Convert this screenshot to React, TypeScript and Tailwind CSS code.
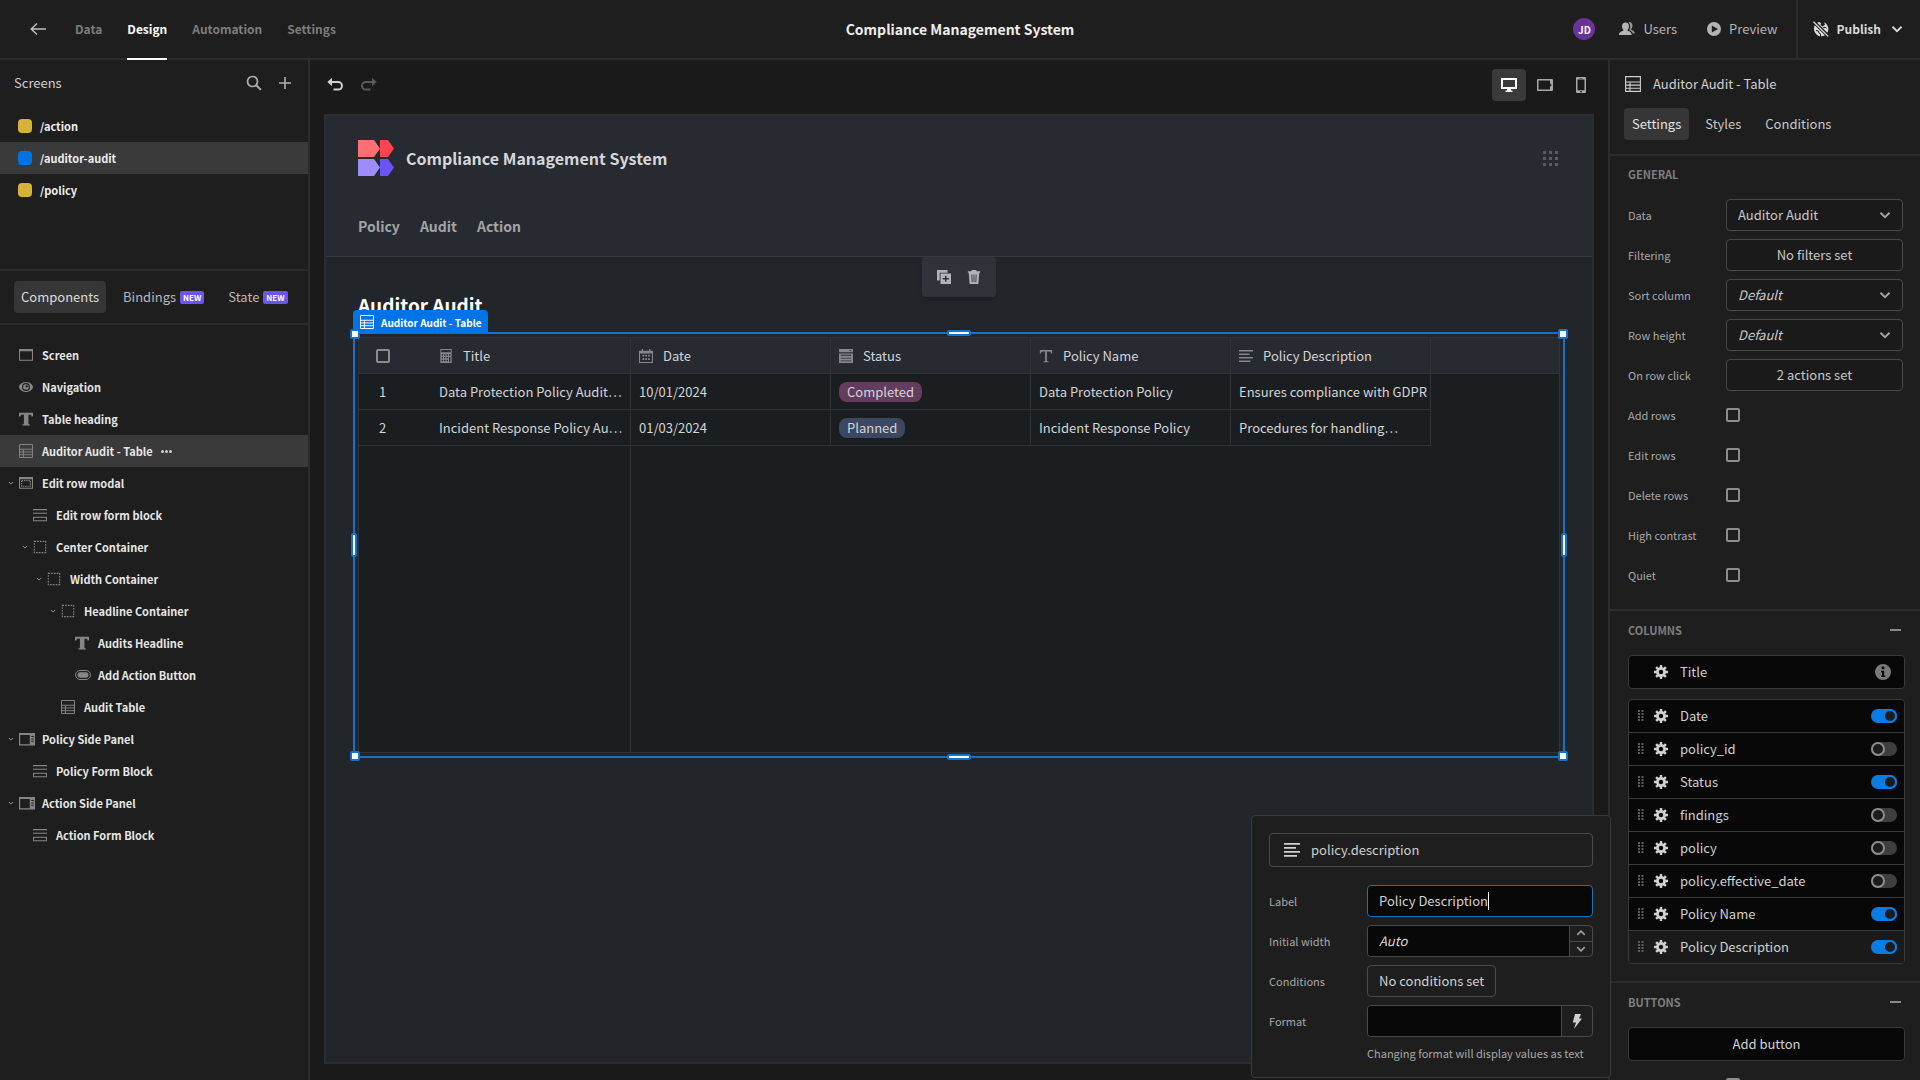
import type { ReactNode } from 'react';

interface IconProps {
  className?: string;
}

function Svg({ className = 'size-4', children }: IconProps & { children: ReactNode }) {
  return (
    <svg viewBox="0 0 16 16" fill="currentColor" className={`shrink-0 ${className}`} aria-hidden="true">
      {children}
    </svg>
  );
}

const BackIcon = () => (
  <Svg>
    <path d="M7 2.5 1.2 8 7 13.5M1.5 8H16" fill="none" stroke="currentColor" strokeWidth="1.4" />
  </Svg>
);

const SearchIcon = () => (
  <Svg>
    <circle cx="6.5" cy="6.5" r="5" fill="none" stroke="currentColor" strokeWidth="1.7" />
    <path d="m10.3 10.3 4.6 4.6" stroke="currentColor" strokeWidth="2" />
  </Svg>
);

const PlusIcon = () => (
  <Svg>
    <path d="M7.200 2h1.600v5.200H14v1.600H8.800V14H7.200V8.800H2V7.200h5.200z" />
  </Svg>
);

const UndoIcon = ({ className }: IconProps) => (
  <Svg className={className}>
    <path d="M5 .8v8.4L.3 5z" />
    <path d="M4 5h7.2a3.7 3.7 0 0 1 0 7.6H6.500" fill="none" stroke="currentColor" strokeWidth="2" />
  </Svg>
);

const ChevronIcon = ({ className = 'w-3 h-3' }: IconProps) => (
  <Svg className={className}>
    <path d="m2 5 6 6 6-6" fill="none" stroke="currentColor" strokeWidth="2.4" />
  </Svg>
);

const UsersIcon = () => (
  <Svg>
    <path d="M6.500 1.500C8.600 1.500 10 3 10 5.300c0 1.500-.6 2.700-1.400 3.500v1c1.600.6 4 1.200 4 3.900V14H0v-.3c0-2.700 2.600-3.300 4.300-3.900v-1C3.500 8 3 6.800 3 5.300 3 3 4.400 1.500 6.500 1.500z" />
    <path d="M9.500 1.200c2-.6 4 .9 4 3.300 0 1.500-.6 2.600-1.300 3.400v.9c1.500.6 3.600 1.300 3.600 3.700h-2c-.5-1.800-2-2.500-3.600-3.200 1.500-2.600 1.300-6.100-.7-8.100z" opacity=".8" />
  </Svg>
);

const PlayIcon = () => (
  <Svg className="size-3.5">
    <path fillRule="evenodd" d="M8 0a8 8 0 1 0 0 16A8 8 0 0 0 8 0zM5.500 4v8l7-4z" />
  </Svg>
);

const GlobeStrikeIcon = () => (
  <Svg>
    <path d="M1.800 4.200 12 14.300A7.300 7.300 0 0 1 1 8.300c-.2-1.500.1-3 .8-4.100zM4.200 1.700 6.500.900 8 2.200 7.500 4l2 1.500L12 3.800l-1-2.500a7.400 7.400 0 0 1 3.300 10.500z" />
    <path d="M.5.8 15.200 15.400" stroke="currentColor" strokeWidth="1.300" />
    <path d="M3 9.500 5.500 10l.5 2 1.500 1V16M9.800 7l2.200-.8 1.500 1" fill="none" stroke="#1e1e1e" strokeWidth="1" />
  </Svg>
);

const DesktopIcon = () => (
  <Svg>
    <path fillRule="evenodd" d="M0 1h16v11H10v1.500h1.500V15h-7v-1.500H6V12H0zM2 3v7h12V3z" />
  </Svg>
);

const TabletIcon = () => (
  <Svg>
    <path fillRule="evenodd" d="M1 2h14a1 1 0 0 1 1 1v10a1 1 0 0 1-1 1H1a1 1 0 0 1-1-1V3a1 1 0 0 1 1-1zm.5 1.500v9H13V9.200h1.200V6.800H13V3.500z" />
  </Svg>
);

const PhoneIcon = () => (
  <Svg>
    <path fillRule="evenodd" d="M4 0h8a1 1 0 0 1 1 1v14a1 1 0 0 1-1 1H4a1 1 0 0 1-1-1V1a1 1 0 0 1 1-1zm.5 2.500v10.800h7V2.500zM7 14.200v1h2v-1zM6.500 .9v.7h3V.9z" />
  </Svg>
);

const TableIcon = ({ className = 'size-3.5' }: IconProps) => (
  <Svg className={className}>
    <path d="M.6.600h14.800v14.800H.6zM.6 6h14.800M.6 9.100h14.800M.6 12.200h14.800M5 6v9.400" fill="none" stroke="currentColor" strokeWidth="1.100" />
  </Svg>
);

const ScreenIcon = ({ className = 'size-3.5' }: IconProps) => (
  <Svg className={className}>
    <path fillRule="evenodd" d="M0 1h16v13.500H0zM1.200 3.600v9.700h13.600V3.600z" />
  </Svg>
);

const ModalIcon = () => (
  <Svg className="size-3.5">
    <path fillRule="evenodd" d="M0 1h16v13.500H0zM1.200 3.600v9.700h13.600V3.600z" />
    <path d="M3 5.300h10v6.400H3z" fill="none" stroke="currentColor" strokeWidth="1.300" strokeDasharray="1.600 1" />
  </Svg>
);

const EyeIcon = () => (
  <Svg className="size-3.5">
    <path fillRule="evenodd" d="M8 2.200C3.600 2.200 0 5.500 0 8s3.600 5.800 8 5.800S16 10.500 16 8 12.400 2.200 8 2.200zm0 1.300a4.500 4.500 0 1 1 0 9 4.500 4.500 0 0 1 0-9z" />
    <path fillRule="evenodd" d="M8 4.800a3.200 3.200 0 1 0 0 6.400 3.200 3.200 0 0 0 0-6.400zm.8 1.300a1.300 1.300 0 1 1 0 2.600 1.300 1.300 0 0 1 0-2.600z" />
  </Svg>
);

const HeadingIcon = ({ className = 'size-3.5' }: IconProps) => (
  <Svg className={className}>
    <path d="M0 .800h16v4.400h-1.600c-.2-1.300-.8-2-2-2h-1.600v10c0 .8.600 1 1.800 1.100v1.200H3.800v-1.200c1.200-.1 1.800-.3 1.800-1.100v-10H3.600c-1.200 0-1.800.7-2 2H0z" />
  </Svg>
);

const TextIcon = () => (
  <Svg className="size-3.5">
    <path d="M1 1h14v4h-1.300c-.1-1.400-.6-2.200-2-2.200H9V13c0 .8.500 1 1.800 1.100v1H5.200v-1C6.500 14 7 13.800 7 13V2.800H4.300c-1.400 0-1.900.8-2 2.200H1z" />
  </Svg>
);

const FormIcon = () => (
  <Svg className="size-3.5">
    <path d="M0 1.800h16M0 6h16" stroke="currentColor" strokeWidth="1.300" />
    <path d="M.6 10.600h14.800v3.900H.6z" fill="none" stroke="currentColor" strokeWidth="1.200" />
  </Svg>
);

const ContainerIcon = () => (
  <Svg className="size-3.5">
    <path d="M1.500 1.500h13v13h-13z" fill="none" stroke="currentColor" strokeWidth="1.300" strokeDasharray="1.900 1.300" />
  </Svg>
);

const PillIcon = () => (
  <Svg className="size-4">
    <rect x=".5" y="3.500" width="15" height="9" rx="4.500" fill="none" stroke="currentColor" strokeWidth="1" />
    <rect x="2.500" y="5.300" width="11" height="5.400" rx="2.700" />
  </Svg>
);

const SidePanelIcon = () => (
  <Svg className="size-4">
    <path fillRule="evenodd" d="M0 2h16v12.500H0zM1.200 4v9.300h9.600V4zM12.200 5v1h2.600V5zm0 2.400v1h2.600v-1zm0 2.400v1h2.600v-1z" />
  </Svg>
);

const DuplicateIcon = () => (
  <Svg className="size-3.5">
    <path d="M0 0h12v3H3v9H0z" />
    <path fillRule="evenodd" d="M4 4h12v12H4zm5.200 2.500v2.700H6.500v1.600h2.700v2.700h1.600v-2.700h2.700V9.200h-2.700V6.500z" />
  </Svg>
);

const TrashIcon = () => (
  <Svg className="size-3.5">
    <path fillRule="evenodd" d="M5.500 0h5l.6 1.500H15V3h-1l-1 13H3L2 3H1V1.500h3.900zM5 5l.4 9h1L6 5zm2.500 0v9h1V5zM10 5l-.4 9h1L11 5z" />
  </Svg>
);

const CalculatorIcon = () => (
  <Svg className="size-3.5">
    <path fillRule="evenodd" d="M1.500 0h13v16h-13zM2.700 1.200v2.600h10.600V1.200zM3 6v1.700h1.700V6zm2.800 0v1.700h1.700V6zm2.800 0v1.700h1.700V6zm2.800 0v1.700H13V6zM3 9v1.700h1.700V9zm2.800 0v1.700h1.700V9zm2.800 0v1.700h1.700V9zm2.800 0v5.500H13V9zM3 12.300V14h1.700v-1.700zm2.800 0V14h1.700v-1.700zm2.800 0V14h1.700v-1.700z" />
  </Svg>
);

const CalendarIcon = () => (
  <Svg className="size-3.5">
    <path fillRule="evenodd" d="M0 2h3V0h1.500v2h7V0H13v2h3v14H0zm1.200 3v9.800h13.600V5z" />
    <path d="M4 6.500h2v2H4zm3.200 0h2v2h-2zm3.200 0h2v2h-2zM4 10.500h2v2H4zm3.200 0h2v2h-2zm3.200 0h2v2h-2z" />
  </Svg>
);

const OptionsIcon = () => (
  <Svg className="size-3.5">
    <path fillRule="evenodd" d="M0 0h16v3.700H0zm11.500 1 1.300 1.700L14.100 1z" />
    <path fillRule="evenodd" d="M0 5h16v11H0zm2 1.700v1h12v-1zm0 3.200v1h12v-1zm0 3.200v1h12v-1z" />
  </Svg>
);

const ParagraphIcon = ({ className = 'size-3.5' }: IconProps) => (
  <Svg className={className}>
    <path d="M0 1h16v1.800H0zM0 5h12v1.800H0zM0 9h16v1.800H0zM0 13h13v1.800H0z" />
  </Svg>
);

const GearIcon = () => (
  <Svg className="size-3.5">
    <path
      fillRule="evenodd"
      d="M6.600 0h2.800v2.400l1.500.6 1.700-1.700 2 2L12.900 5l.6 1.600H16v2.800h-2.500l-.6 1.600 1.700 1.700-2 2-1.700-1.700-1.500.6V16H6.600v-2.400L5.100 13l-1.700 1.700-2-2L3.100 11l-.6-1.600H0V6.600h2.500L3.100 5 1.400 3.300l2-2L5.100 3l1.500-.6zM8 5.500a2.500 2.500 0 1 0 0 5 2.500 2.500 0 0 0 0-5z"
    />
  </Svg>
);

const InfoIcon = () => (
  <Svg>
    <path fillRule="evenodd" d="M8 0a8 8 0 1 0 0 16A8 8 0 0 0 8 0zm0 2.300a1.500 1.500 0 1 1 0 3 1.500 1.500 0 0 1 0-3zM6 6.800h3.200v4.700h1V13H6v-1.500h1V8.200H6z" />
  </Svg>
);

const DragIcon = () => (
  <svg viewBox="0 0 6 12" fill="currentColor" className="h-3 w-1.5 shrink-0" aria-hidden="true">
    {[0, 3, 6, 9].map((y) => (
      <path key={y} d={`M0 ${y}h2v2H0zM3.500 ${y}h2v2h-2z`} />
    ))}
  </svg>
);

const BoltIcon = () => (
  <Svg>
    <path d="M6 1h6l-2 4.600h3L5 16l2-6.500H3.800z" />
  </Svg>
);

const Logo = () => (
  <svg viewBox="0 0 36 36" className="size-9 shrink-0" aria-hidden="true">
    <path d="M0 0h16l6 8.500-6 8.500H0z" fill="#ff6f74" />
    <path d="M22 0h8l6 8.500-6 8.500h-8z" fill="#ff4550" />
    <path d="M0 19h16l6 8.500-6 8.500H0z" fill="#9d8cfa" />
    <path d="M22 19h8l6 8.500-6 8.500h-8z" fill="#6a55f3" />
  </svg>
);

const SCREENS = [
  { path: '/action', color: 'bg-[#d8b13a]', active: false },
  { path: '/auditor-audit', color: 'bg-[#0073e0]', active: true },
  { path: '/policy', color: 'bg-[#d8b13a]', active: false },
];

const INDENT = ['pl-[7px]', 'pl-[21px]', 'pl-[35px]', 'pl-[49px]', 'pl-[63px]'];

interface TreeNode {
  label: string;
  depth: number;
  icon: ReactNode;
  open?: boolean;
  active?: boolean;
}

const TREE: TreeNode[] = [
  { label: 'Screen', depth: 0, icon: <ScreenIcon /> },
  { label: 'Navigation', depth: 0, icon: <EyeIcon /> },
  { label: 'Table heading', depth: 0, icon: <HeadingIcon /> },
  { label: 'Auditor Audit - Table', depth: 0, icon: <TableIcon />, active: true },
  { label: 'Edit row modal', depth: 0, icon: <ModalIcon />, open: true },
  { label: 'Edit row form block', depth: 1, icon: <FormIcon /> },
  { label: 'Center Container', depth: 1, icon: <ContainerIcon />, open: true },
  { label: 'Width Container', depth: 2, icon: <ContainerIcon />, open: true },
  { label: 'Headline Container', depth: 3, icon: <ContainerIcon />, open: true },
  { label: 'Audits Headline', depth: 4, icon: <HeadingIcon /> },
  { label: 'Add Action Button', depth: 4, icon: <PillIcon /> },
  { label: 'Audit Table', depth: 3, icon: <TableIcon /> },
  { label: 'Policy Side Panel', depth: 0, icon: <SidePanelIcon />, open: true },
  { label: 'Policy Form Block', depth: 1, icon: <FormIcon /> },
  { label: 'Action Side Panel', depth: 0, icon: <SidePanelIcon />, open: true },
  { label: 'Action Form Block', depth: 1, icon: <FormIcon /> },
];

const TABLE_COLUMNS = [
  { label: 'Title', icon: <CalculatorIcon /> },
  { label: 'Date', icon: <CalendarIcon /> },
  { label: 'Status', icon: <OptionsIcon /> },
  { label: 'Policy Name', icon: <TextIcon /> },
  { label: 'Policy Description', icon: <ParagraphIcon /> },
];

const ROWS = [
  {
    title: 'Data Protection Policy Audit…',
    date: '10/01/2024',
    status: 'Completed',
    badge: 'bg-[#633d5f]',
    policy: 'Data Protection Policy',
    description: 'Ensures compliance with GDPR',
  },
  {
    title: 'Incident Response Policy Au…',
    date: '01/03/2024',
    status: 'Planned',
    badge: 'bg-[#3b4763]',
    policy: 'Incident Response Policy',
    description: 'Procedures for handling…',
  },
];

const FIELDS = [
  { label: 'Date', on: true },
  { label: 'policy_id', on: false },
  { label: 'Status', on: true },
  { label: 'findings', on: false },
  { label: 'policy', on: false },
  { label: 'policy.effective_date', on: false },
  { label: 'Policy Name', on: true },
  { label: 'Policy Description', on: true },
];

const CHECKBOX = 'block size-3.5 shrink-0 appearance-none rounded-xs border-2 border-[#8c8c8c]';
const FIELD_BOX = 'h-8 w-full rounded-sm border border-[#494949] bg-[#1a1a1a] text-[#c8c8c8]';

function TopBar() {
  return (
    <header className="grid h-[60px] shrink-0 grid-cols-[1fr_auto_1fr] border-b-2 border-[#2c2c2c] text-[13px]">
      <div className="flex items-center pl-[30px]">
        <button aria-label="Back" className="mr-[29px] text-[#c0c0c0]">
          <BackIcon />
        </button>
        <nav className="-mb-0.5 flex gap-[25px] self-stretch text-xs font-bold text-[#7d7d7d]">
          <a href="#data" className="flex items-center border-b-2 border-transparent">Data</a>
          <a href="#design" className="flex items-center border-b-2 border-white text-white">Design</a>
          <a href="#automation" className="flex items-center border-b-2 border-transparent">Automation</a>
          <a href="#settings" className="flex items-center border-b-2 border-transparent">Settings</a>
        </nav>
      </div>
      <h1 className="self-center text-sm font-bold text-[#ededed]">Compliance Management System</h1>
      <div className="flex items-center justify-end text-[#b4b4b4]">
        <span className="mr-6 flex size-[22px] items-center justify-center rounded-full bg-[#6a3399] text-[10px] font-bold text-white">
          JD
        </span>
        <button className="mr-[30px] flex items-center gap-2">
          <UsersIcon />
          Users
        </button>
        <button className="mr-[18px] flex items-center gap-2">
          <PlayIcon />
          Preview
        </button>
        <button className="flex items-center gap-2 self-stretch border-l-2 border-[#2c2c2c] pr-[17px] pl-[15px] text-xs font-bold text-[#dadada]">
          <GlobeStrikeIcon />
          Publish
          <ChevronIcon className="ml-0.5 size-3" />
        </button>
      </div>
    </header>
  );
}

function LeftPanel() {
  return (
    <aside className="w-[310px] shrink-0 border-r-2 border-[#2c2c2c]">
      <section className="h-[211px] border-b-2 border-[#2c2c2c]">
        <div className="flex h-[46px] items-center pr-[15px] pl-3.5">
          <h2 className="flex-1 text-[13px] text-[#d0d0d0]">Screens</h2>
          <div className="flex gap-[15px] text-[#b0b0b0]">
            <button aria-label="Search screens"><SearchIcon /></button>
            <button aria-label="Add screen"><PlusIcon /></button>
          </div>
        </div>
        <ul className="pt-1 text-[11px] font-bold text-[#efefef]">
          {SCREENS.map((s) => (
            <li key={s.path} className={`flex h-8 items-center gap-2 pl-[18px] ${s.active ? 'bg-[#3a3a3a]' : ''}`}>
              <span className={`size-3.5 rounded-sm ${s.color}`} />
              {s.path}
            </li>
          ))}
        </ul>
      </section>
      <div className="flex h-[54px] items-center border-b-2 border-[#2c2c2c] pl-3.5 text-[13px] text-[#b8b8b8]">
        <button className="h-8 rounded-sm bg-[#363636] px-[7px] text-[#dcdcdc]">Components</button>
        <button className="ml-[17px] flex items-center gap-1">
          Bindings
          <span className="rounded-xs bg-[#6a55f3] px-[3px] text-[8px] leading-[13px] font-bold text-white">NEW</span>
        </button>
        <button className="ml-6 flex items-center gap-1">
          State
          <span className="rounded-xs bg-[#6a55f3] px-[3px] text-[8px] leading-[13px] font-bold text-white">NEW</span>
        </button>
      </div>
      <ul className="pt-3.5 text-[11px] font-bold text-[#e6e6e6]">
        {TREE.map((node) => (
          <li
            key={node.label}
            className={`flex h-8 items-center ${INDENT[node.depth]} ${node.active ? 'bg-[#3a3a3a]' : ''}`}
          >
            <span className="w-3 text-[#9a9a9a]">{node.open && <ChevronIcon className="ml-px size-1.5" />}</span>
            <span className="w-[23px] text-[#868686]">{node.icon}</span>
            {node.label}
            {node.active && (
              <button aria-label="More actions" className="ml-2 flex gap-px">
                <span className="size-[3px] rounded-full bg-[#d0d0d0]" />
                <span className="size-[3px] rounded-full bg-[#d0d0d0]" />
                <span className="size-[3px] rounded-full bg-[#d0d0d0]" />
              </button>
            )}
          </li>
        ))}
      </ul>
    </aside>
  );
}

function AuditTable() {
  const cell = 'truncate border-r border-b border-[#2f3337] pl-2';
  return (
    <table className="h-full w-full table-fixed border-separate border-spacing-0 border border-[#2f3337] bg-[#1b1e20] text-left text-[13px] text-[#d4d5d6]">
      <colgroup>
        <col className="w-[72px]" />
        {TABLE_COLUMNS.map((c) => (
          <col key={c.label} className="w-[200px]" />
        ))}
        <col />
      </colgroup>
      <thead>
        <tr className="h-9 bg-[#272a31]">
          <th className="border-b border-[#2f3337] pl-[17px]">
            <input type="checkbox" aria-label="Select all rows" className={CHECKBOX} />
          </th>
          {TABLE_COLUMNS.map((c) => (
            <th key={c.label} className={`${cell} font-normal`}>
              <span className="flex items-center gap-2.5">
                <span className="text-[#85888d]">{c.icon}</span>
                {c.label}
              </span>
            </th>
          ))}
          <td className="border-b border-[#2f3337]" />
        </tr>
      </thead>
      <tbody>
        {ROWS.map((row, i) => (
          <tr key={row.title} className="h-9">
            <td className="border-b border-[#2f3337] pl-5">{i + 1}</td>
            <td className={cell}>{row.title}</td>
            <td className={cell}>{row.date}</td>
            <td className={cell}>
              <span className={`inline-block h-5 rounded-lg px-2 leading-5 ${row.badge}`}>{row.status}</span>
            </td>
            <td className={cell}>{row.policy}</td>
            <td className={cell}>{row.description}</td>
            <td />
          </tr>
        ))}
        <tr>
          <td colSpan={2} className="border-r border-[#2f3337]" />
          <td colSpan={5} />
        </tr>
      </tbody>
    </table>
  );
}

function Selection() {
  const corner = 'absolute size-2.5 rounded-xs border-2 border-[#1272cc] bg-white';
  const bar = 'absolute rounded-xs border-2 border-[#1272cc] bg-white';
  return (
    <div className="pointer-events-none absolute -inset-[5px] border-2 border-[#1272cc]">
      <div className="absolute -top-6 -left-0.5 flex h-6 items-center gap-[7px] rounded-t-sm bg-[#0073e6] pr-1.5 pl-[7px] text-[10px] font-bold whitespace-nowrap text-white">
        <TableIcon />
        Auditor Audit - Table
      </div>
      <span className={`${corner} -top-[5px] -left-[5px]`} />
      <span className={`${corner} -top-[5px] -right-[5px]`} />
      <span className={`${corner} -bottom-[5px] -left-[5px]`} />
      <span className={`${corner} -right-[5px] -bottom-[5px]`} />
      <span className={`${bar} -top-1 left-1/2 h-1.5 w-6 -translate-x-1/2`} />
      <span className={`${bar} -bottom-1 left-1/2 h-1.5 w-6 -translate-x-1/2`} />
      <span className={`${bar} top-1/2 -left-1 h-6 w-1.5 -translate-y-1/2`} />
      <span className={`${bar} top-1/2 -right-1 h-6 w-1.5 -translate-y-1/2`} />
    </div>
  );
}

function Canvas() {
  return (
    <div className="relative flex flex-1 flex-col border-2 border-[#2b2d2e] bg-[#222529]">
      <div className="border-b border-[#363a40] bg-[#272a31] px-8 pt-6 pb-[18px]">
        <div className="flex items-center gap-3">
          <Logo />
          <h2 className="flex-1 text-base font-bold text-[#d6d7d9]">Compliance Management System</h2>
          <svg viewBox="0 0 15 15" fill="#595c61" className="mr-0.5 size-[15px]" aria-hidden="true">
            {[0, 6, 12].map((y) => (
              <path key={y} d={`M0 ${y}h3v3H0zM6 ${y}h3v3H6zM12 ${y}h3v3h-3z`} />
            ))}
          </svg>
        </div>
        <nav className="mt-[38px] flex h-6 items-center gap-5 text-sm font-bold text-[#a2a4a7]">
          <a href="#policy">Policy</a>
          <a href="#audit">Audit</a>
          <a href="#action">Action</a>
        </nav>
      </div>
      <div className="px-8 pt-8">
        <h3 className="mb-4 h-8 text-[19px] leading-8 font-bold text-white">Auditor Audit</h3>
        <div className="relative h-[416px]">
          <AuditTable />
          <Selection />
        </div>
      </div>
      <div className="absolute top-[141px] left-1/2 flex h-10 w-[74px] -translate-x-1/2 items-center justify-center gap-4 rounded-sm bg-[#2f3238] text-[#b2b4ba] shadow-md">
        <button aria-label="Duplicate"><DuplicateIcon /></button>
        <button aria-label="Delete"><TrashIcon /></button>
      </div>
    </div>
  );
}

function ColumnPopover() {
  const label = 'text-[11px] text-[#a8a8a8]';
  return (
    <div className="absolute right-[-3px] bottom-0.5 z-10 w-[360px] rounded-sm border border-[#3a3a3a] bg-[#1e1e1e] px-[17px] pt-[17px] pb-4 text-[13px] text-[#d0d0d0]">
      <div className="mb-[18px] flex h-[34px] items-center gap-[11px] rounded-sm border border-[#494949] pl-3.5">
        <ParagraphIcon className="size-4" />
        policy.description
      </div>
      <div className="grid grid-cols-[98px_minmax(0,1fr)] items-center gap-y-2">
        <label htmlFor="col-label" className={label}>Label</label>
        <div className="flex h-8 items-center rounded-sm border border-[#1f6fb5] bg-[#080808] pl-[11px]">
          <input id="col-label" defaultValue="Policy Description" className="field-sizing-content outline-none" />
          <span className="h-[18px] w-px bg-white" />
        </div>
        <label htmlFor="col-width" className={label}>Initial width</label>
        <div className="flex h-8 overflow-hidden rounded-sm border border-[#494949]">
          <input
            id="col-width"
            placeholder="Auto"
            className="min-w-0 flex-1 bg-[#080808] pl-[11px] italic outline-none placeholder:text-[#d8d8d8]"
          />
          <div className="flex w-[23px] flex-col border-l border-[#494949] text-[#a0a0a0]">
            <button aria-label="Increase" className="flex flex-1 items-center justify-center border-b border-[#494949]">
              <ChevronIcon className="size-2.5 rotate-180" />
            </button>
            <button aria-label="Decrease" className="flex flex-1 items-center justify-center">
              <ChevronIcon className="size-2.5" />
            </button>
          </div>
        </div>
        <span className={label}>Conditions</span>
        <button className="h-8 justify-self-start rounded-sm border border-[#494949] px-[11px]">No conditions set</button>
        <label htmlFor="col-format" className={label}>Format</label>
        <div className="flex h-8 overflow-hidden rounded-sm border border-[#494949]">
          <input id="col-format" className="min-w-0 flex-1 bg-[#080808] px-[11px] outline-none" />
          <button aria-label="Bind format" className="flex w-[31px] items-center justify-center border-l border-[#494949]">
            <BoltIcon />
          </button>
        </div>
        <p className="col-start-2 text-[11px] leading-4 whitespace-nowrap text-[#a8a8a8]">
          Changing format will display values as text
        </p>
      </div>
    </div>
  );
}

function Workspace() {
  return (
    <main className="relative flex min-w-0 flex-1 flex-col bg-[#1a1a1a] px-3.5 pb-4">
      <div className="flex h-[54px] shrink-0 items-center justify-between pb-1 pl-[3px]">
        <div className="flex gap-[18px] text-[#d0d0d0]">
          <button aria-label="Undo"><UndoIcon /></button>
          <button aria-label="Redo" disabled className="text-[#5a5a5a]"><UndoIcon className="size-4 -scale-x-100" /></button>
        </div>
        <div className="-mr-1 flex gap-0.5 text-[#a8a8a8]">
          <button aria-label="Desktop" className="flex h-8 w-[34px] items-center justify-center rounded-sm bg-[#3a3a3a] text-white">
            <DesktopIcon />
          </button>
          <button aria-label="Tablet" className="flex h-8 w-[34px] items-center justify-center"><TabletIcon /></button>
          <button aria-label="Mobile" className="flex h-8 w-[34px] items-center justify-center"><PhoneIcon /></button>
        </div>
      </div>
      <Canvas />
      <ColumnPopover />
    </main>
  );
}

function SettingSelect({ id, label, value, italic }: { id: string; label: string; value: string; italic?: boolean }) {
  return (
    <>
      <label htmlFor={id}>{label}</label>
      <div className="relative text-[13px]">
        <select id={id} className={`${FIELD_BOX} appearance-none pl-[11px] ${italic ? 'italic' : ''}`}>
          <option>{value}</option>
        </select>
        <ChevronIcon className="pointer-events-none absolute top-2.5 right-3 size-3 text-[#a8a8a8]" />
      </div>
    </>
  );
}

function SectionTitle({ children }: { children: string }) {
  return (
    <div className="flex h-[38px] items-center justify-between pr-1 text-[11px] font-bold text-[#7f7f7f]">
      <h3>{children}</h3>
      <button aria-label={`Collapse ${children}`} className="h-0.5 w-[11px] bg-[#8a8a8a]" />
    </div>
  );
}

function RightPanel() {
  return (
    <aside className="w-[312px] shrink-0 overflow-hidden border-l-2 border-[#2c2c2c] text-[13px] text-[#c8c8c8]">
      <div className="h-24 border-b-2 border-[#2c2c2c]">
        <div className="flex h-12 items-center gap-3 pl-[15px] text-[#d0d0d0]">
          <TableIcon className="size-4" />
          <h2>Auditor Audit - Table</h2>
        </div>
        <div className="flex gap-4 pl-3.5">
          <button className="h-8 rounded-sm bg-[#363636] px-2 text-[#e4e4e4]">Settings</button>
          <button>Styles</button>
          <button className="ml-2">Conditions</button>
        </div>
      </div>
      <section className="border-b-2 border-[#2c2c2c] pr-[17px] pb-[18px] pl-[18px]">
        <h3 className="flex h-[43px] items-center pb-1.5 text-[11px] font-bold text-[#7f7f7f]">GENERAL</h3>
        <div className="grid auto-rows-[32px] grid-cols-[98px_1fr] items-center gap-y-2 text-[11px] text-[#a8a8a8]">
          <SettingSelect id="data" label="Data" value="Auditor Audit" />
          <span>Filtering</span>
          <button className={`${FIELD_BOX} text-[13px]`}>No filters set</button>
          <SettingSelect id="sort" label="Sort column" value="Default" italic />
          <SettingSelect id="height" label="Row height" value="Default" italic />
          <span>On row click</span>
          <button className={`${FIELD_BOX} text-[13px]`}>2 actions set</button>
          {['Add rows', 'Edit rows', 'Delete rows', 'High contrast', 'Quiet'].map((label) => (
            <label key={label} className="col-span-2 grid grid-cols-subgrid items-center">
              {label}
              <input type="checkbox" className={CHECKBOX} />
            </label>
          ))}
        </div>
      </section>
      <section className="border-b-2 border-[#2c2c2c] pr-[15px] pb-[17px] pl-[18px]">
        <SectionTitle>COLUMNS</SectionTitle>
        <div className="mt-1.5 mb-2.5 flex h-[34px] items-center rounded-sm border border-[#3a3a3a] bg-[#080808] pr-[13px] pl-[25px] text-[#d0d0d0]">
          <GearIcon />
          <span className="ml-3 flex-1">Title</span>
          <span className="text-[#7a7a7a]"><InfoIcon /></span>
        </div>
        <ul className="divide-y divide-[#3a3a3a] overflow-hidden rounded-sm border border-[#3a3a3a] bg-[#080808] text-[#d0d0d0]">
          {FIELDS.map((f) => (
            <li key={f.label} className="last:bg-[#1a1a1a]">
              <label className="flex h-8 items-center pr-[7px] pl-[9px]">
                <span className="mr-2.5 text-[#5c5c5c]"><DragIcon /></span>
                <GearIcon />
                <span className="ml-3 flex-1">{f.label}</span>
                <input
                  type="checkbox"
                  role="switch"
                  defaultChecked={f.on}
                  className="h-3.5 w-[26px] appearance-none rounded-full bg-[#3e3e3e] before:block before:size-3.5 before:rounded-full before:border-2 before:border-[#8c8c8c] before:bg-[#1c1c1c] checked:bg-[#0a7de4] checked:before:ml-3 checked:before:border-[#0a7de4]"
                />
              </label>
            </li>
          ))}
        </ul>
      </section>
      <section className="pr-[15px] pl-[18px]">
        <SectionTitle>BUTTONS</SectionTitle>
        <button className="mt-1.5 h-[34px] w-full rounded-sm border border-[#3a3a3a] bg-[#080808] text-[#d0d0d0]">
          Add button
        </button>
        <div className="mt-[17px] grid grid-cols-[98px_1fr]">
          <input type="checkbox" aria-label="Collapse buttons" className={`${CHECKBOX} col-start-2`} />
        </div>
      </section>
    </aside>
  );
}

export default function App() {
  return (
    <div className="flex h-screen flex-col overflow-hidden bg-[#1e1e1e] font-['Noto_Sans_CJK_SC','Open_Sans',sans-serif]">
      <TopBar />
      <div className="flex min-h-0 flex-1">
        <LeftPanel />
        <Workspace />
        <RightPanel />
      </div>
    </div>
  );
}
